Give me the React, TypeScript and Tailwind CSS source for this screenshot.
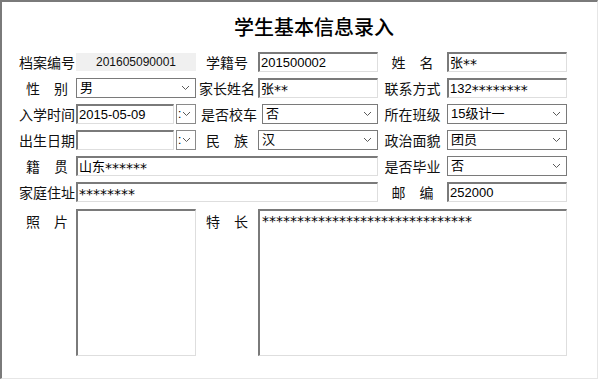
import React from "react";

const CJK = "font-['Noto_Sans_CJK_SC',sans-serif]";
const VAL = "font-['Liberation_Sans','Noto_Sans_CJK_SC',sans-serif]";

function Stars({ n }: { n: number }) {
  return (
    <span className="font-['DejaVu_Sans',sans-serif] text-[14px] inline-block translate-y-[2px]">
      {"*".repeat(n)}
    </span>
  );
}

function Label({ text, w }: { text: string; w: string }) {
  return (
    <div className={`${w} ${CJK} shrink-0 text-center text-[14px] leading-[20px] text-[#111] whitespace-pre`}>
      {text}
    </div>
  );
}

function Sunken({ w, children, h = "h-[20px]" }: { w: string; children?: React.ReactNode; h?: string }) {
  return (
    <div
      className={`${w} ${h} ${VAL} shrink-0 bg-white border-t-2 border-l-2 border-t-[#7a7a7a] border-l-[#7a7a7a] border-r border-b border-r-[#dedede] border-b-[#dedede] pl-[1px] text-[13px] leading-[17px] text-black overflow-hidden whitespace-nowrap`}
    >
      {children}
    </div>
  );
}

function Chevron() {
  return (
    <svg width="9" height="6" viewBox="0 0 9 6" className="shrink-0">
      <polyline points="1,1 4.5,4.5 8,1" fill="none" stroke="#5a5a5a" strokeWidth="1" />
    </svg>
  );
}

function Select({ w, value }: { w: string; value: string }) {
  return (
    <div
      className={`${w} h-[20px] ${VAL} shrink-0 flex items-center bg-white border border-[#7a7a7a] pl-[3px] pr-[5px] text-[13px] text-black`}
    >
      <span className="flex-1 leading-[18px]">{value}</span>
      <Chevron />
    </div>
  );
}

function DateField({ value }: { value: string }) {
  return (
    <div className="flex w-[120px] shrink-0 gap-[2px]">
      <Sunken w="w-[98px]">{value}</Sunken>
      <div className="w-[20px] h-[20px] flex items-center border border-[#8a8a8a] bg-white pl-[1px] gap-[1px]">
        <span className={`${VAL} text-[12px] leading-[18px] text-black`}>:</span>
        <Chevron />
      </div>
    </div>
  );
}

export default function App() {
  return (
    <div className="w-[600px] h-[380px] bg-white">
      <div className="w-[598px] h-[379px] border-t-2 border-l-2 border-[#7a7a7a] border-r border-b border-r-[#e6e6e6] border-b-[#e6e6e6] flex flex-col">
        <div className="h-[50px] flex items-center pl-[232px]">
          <span className={`${CJK} text-[20px] leading-[22px] font-medium text-black`}>学生基本信息录入</span>
        </div>
        <div className="pl-[16px] flex flex-col gap-[6px]">
          <div className="flex h-[20px]">
            <Label text="档案编号" w="w-[58px]" />
            <div className={`w-[120px] h-[18px] mt-[1px] bg-[#f0f0f0] ${VAL} text-[12px] leading-[18px] text-center text-[#111]`}>
              201605090001
            </div>
            <Label text="学籍号" w="w-[62px]" />
            <Sunken w="w-[120px]">201500002</Sunken>
            <Label text="姓　名" w="w-[69px]" />
            <Sunken w="w-[120px]">
              张<Stars n={2} />
            </Sunken>
          </div>
          <div className="flex h-[20px]">
            <Label text="性　别" w="w-[58px]" />
            <Select w="w-[120px]" value="男" />
            <Label text="家长姓名" w="w-[62px]" />
            <Sunken w="w-[120px]">
              张<Stars n={2} />
            </Sunken>
            <Label text="联系方式" w="w-[69px]" />
            <Sunken w="w-[120px]">
              132<Stars n={8} />
            </Sunken>
          </div>
          <div className="flex h-[20px]">
            <Label text="入学时间" w="w-[58px]" />
            <DateField value="2015-05-09" />
            <Label text="是否校车" w="w-[66px]" />
            <Select w="w-[116px]" value="否" />
            <Label text="所在班级" w="w-[69px]" />
            <Select w="w-[120px]" value="15级计一" />
          </div>
          <div className="flex h-[20px]">
            <Label text="出生日期" w="w-[58px]" />
            <DateField value="" />
            <Label text="民　族" w="w-[62px]" />
            <Select w="w-[120px]" value="汉" />
            <Label text="政治面貌" w="w-[69px]" />
            <Select w="w-[120px]" value="团员" />
          </div>
          <div className="flex h-[20px]">
            <Label text="籍　贯" w="w-[58px]" />
            <Sunken w="w-[302px]">
              山东<Stars n={6} />
            </Sunken>
            <Label text="是否毕业" w="w-[69px]" />
            <Select w="w-[120px]" value="否" />
          </div>
          <div className="flex h-[20px]">
            <Label text="家庭住址" w="w-[58px]" />
            <Sunken w="w-[302px]">
              <Stars n={8} />
            </Sunken>
            <Label text="邮　编" w="w-[69px]" />
            <Sunken w="w-[120px]">252000</Sunken>
          </div>
          <div className="flex mt-[1px]">
            <div className="pt-[2px]">
              <Label text="照　片" w="w-[58px]" />
            </div>
            <Sunken w="w-[120px]" h="h-[147px]" />
            <div className="pt-[2px]">
              <Label text="特　长" w="w-[62px]" />
            </div>
            <Sunken w="w-[309px]" h="h-[147px]">
              <div className="pl-[1px]">
                <Stars n={30} />
              </div>
            </Sunken>
          </div>
        </div>
      </div>
    </div>
  );
}
